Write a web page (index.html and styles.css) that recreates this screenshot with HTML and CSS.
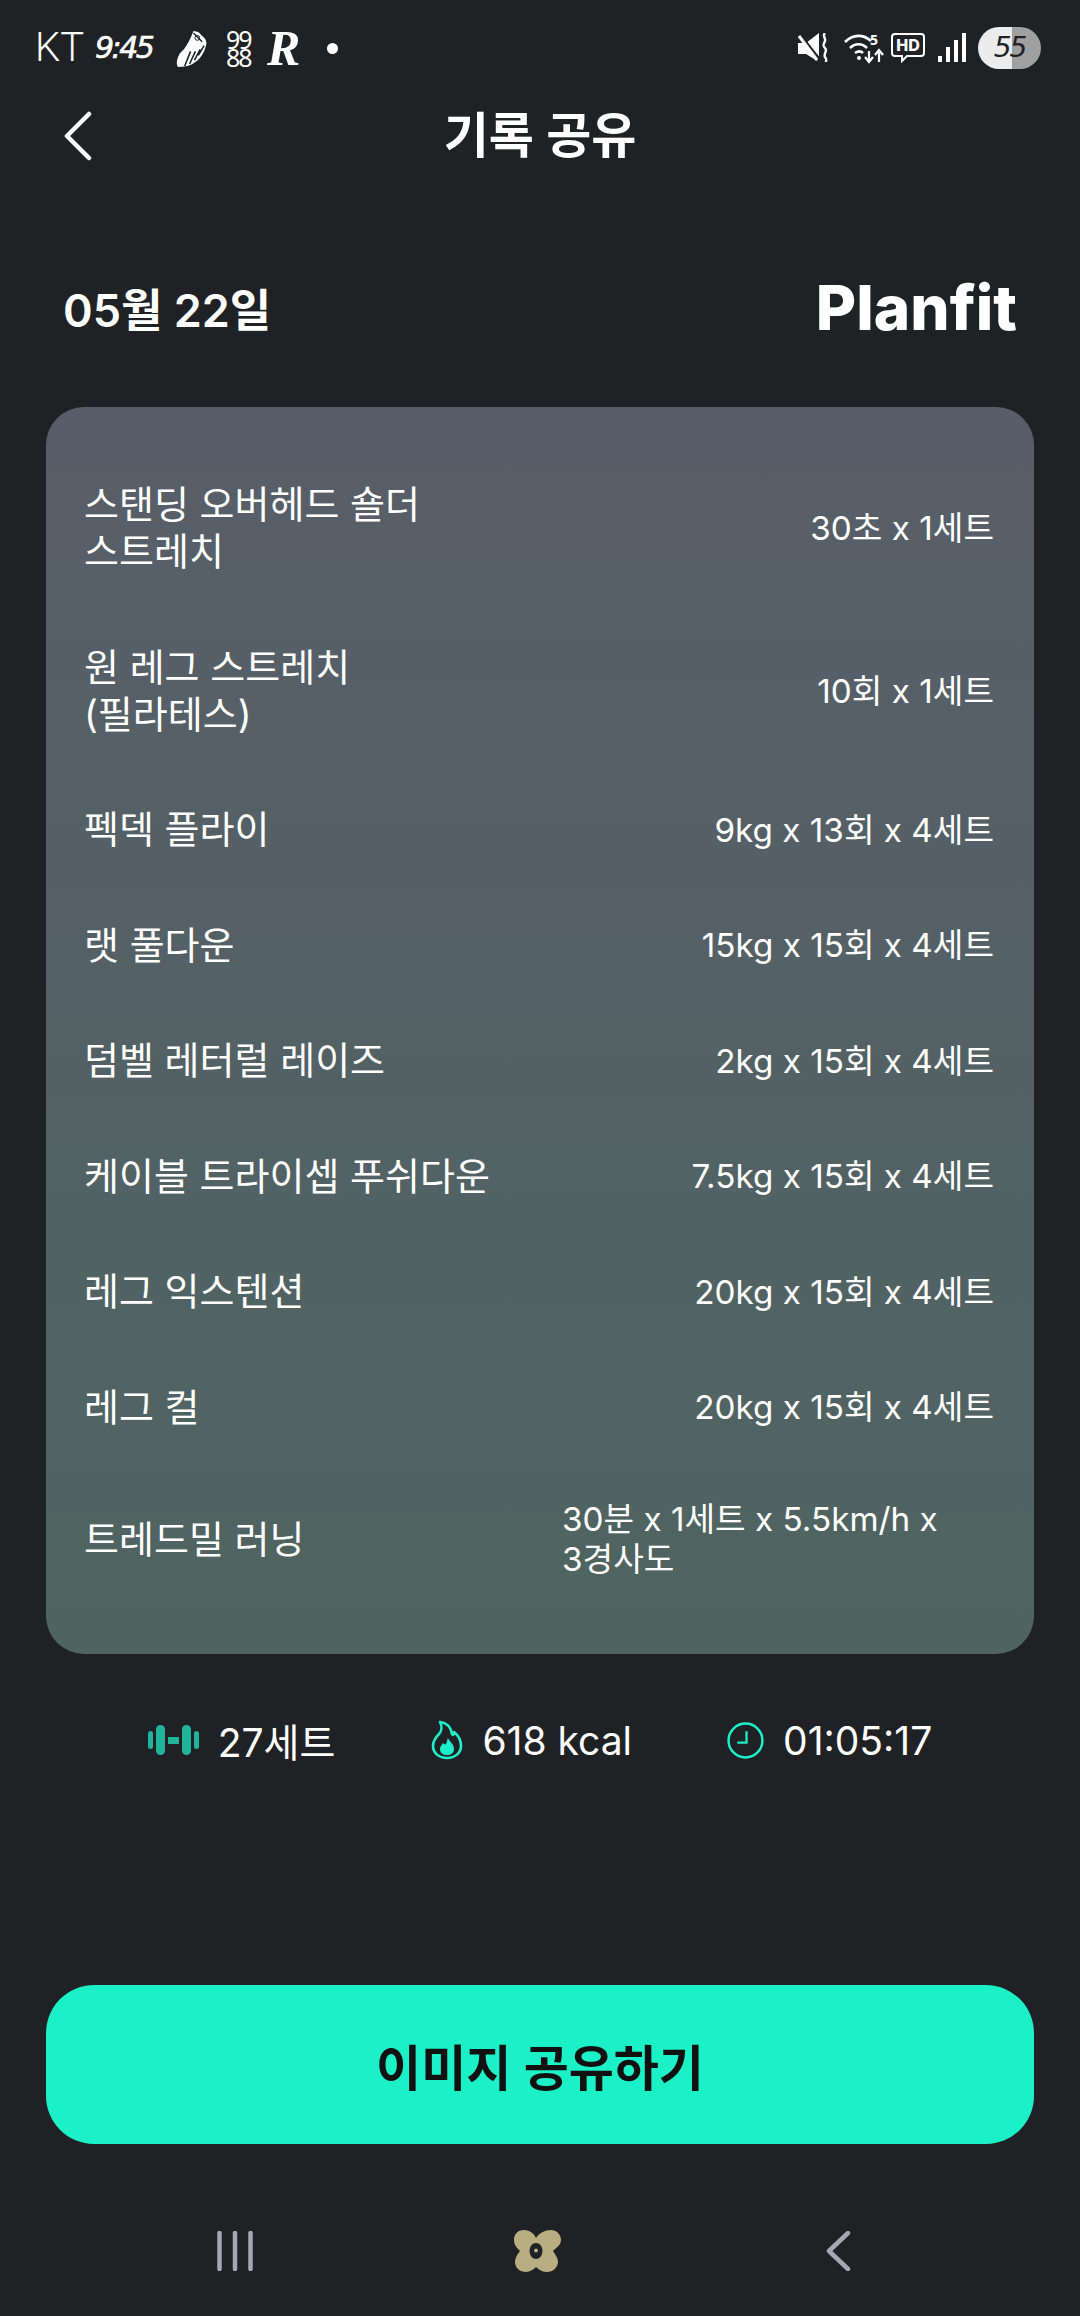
FILE: index.html
```html
<!DOCTYPE html>
<html lang="ko">
<head>
<meta charset="utf-8">
<title>기록 공유</title>
<link rel="stylesheet" href="styles.css">
</head>
<body>
<main class="app">
  <div class="status">
    <div class="status-left">
      <span class="carrier">KT</span>
      <span class="clock-text">9:45</span>
      <svg class="shoe" width="31" height="39" viewBox="0 0 32 40"><path d="M2 39c-2-3-1-7 0-10l2-4 4-4c4-5 7-11 10-19l5 1 7 7c1 2 2 4 1 7-2 7-5 13-11 17-5 4-11 5-18 5z" fill="#fff"/><path d="M9 38l6-15M14 36l6-13M19 32l6-11M23 27l6-10" stroke="#1f2125" stroke-width="1.600" fill="none"/><path d="M18 4l9 9" stroke="#1f2125" stroke-width="1.400"/><circle cx="22" cy="9" r="2.500" fill="none" stroke="#1f2125" stroke-width="1"/></svg>
      <span class="nines">99<br>88</span>
      <span class="r-logo">R</span>
      <span class="dot"></span>
    </div>
    <div class="status-right">
      <svg class="ic-mute" width="30" height="30" viewBox="0 0 30 30"><path d="M0 10h8L21 0v29L8 21H0z" fill="#fff"/><path d="M0 0l22 28" stroke="#1f2125" stroke-width="4"/><path d="M1 3l18 24" stroke="#fff" stroke-width="3"/><path d="M27 0c-3 3 1 5 0 8s-3 4 0 7-2 6 0 9 1 2 1 5" stroke="#fff" stroke-width="2.400" fill="none"/></svg>
      <svg class="ic-wifi" width="40" height="30" viewBox="0 0 40 30"><path d="M1 9c8-8 18-8 26-1M6 15c5-5 12-5 17 0M11 20c3-2 6-2 8 0" stroke="#fff" stroke-width="2.600" fill="none"/><circle cx="15" cy="25" r="2" fill="#fff"/><path d="M25 18v10M21 24l4 5 4-5M35 29V18M31 22l4-5 4 5" stroke="#fff" stroke-width="2.200" fill="none"/><text x="26" y="12" class="wifi-five">5</text></svg>
      <svg class="ic-hd" width="36" height="30" viewBox="0 0 36 30"><path d="M5 1h26a3 3 0 0 1 3 3v16a3 3 0 0 1-3 3H17l-5 5v-5H5a3 3 0 0 1-3-3V4a3 3 0 0 1 3-3z" fill="none" stroke="#fff" stroke-width="2"/><text x="18" y="18" class="hd-text">HD</text></svg>
      <svg class="ic-signal" width="28" height="30" viewBox="0 0 28 30"><path d="M0 23h4v6H0zM8 14h4v15H8zM16 7h4v22h-4zM24 0h4v29h-4z" fill="#fff"/></svg>
      <div class="battery"><span class="battery-num">55</span></div>
    </div>
  </div>

  <header class="head">
    <svg class="back" width="28" height="50" viewBox="0 0 28 50"><path d="M25 3L3 25l22 22" fill="none" stroke="#fff" stroke-width="4.500" stroke-linecap="round" stroke-linejoin="round"/></svg>
    <h1 class="title">기록 공유</h1>
    <span></span>
  </header>

  <div class="date-row">
    <span class="date">05월 22일</span>
    <span class="brand">Planfit</span>
  </div>

  <section class="card">
    <div class="row"><div class="ex">스탠딩 오버헤드 숄더<br>스트레치</div><div class="val">30초 x 1세트</div></div>
    <div class="row"><div class="ex">원 레그 스트레치<br>(필라테스)</div><div class="val">10회 x 1세트</div></div>
    <div class="row"><div class="ex">펙덱 플라이</div><div class="val">9kg x 13회 x 4세트</div></div>
    <div class="row"><div class="ex">랫 풀다운</div><div class="val">15kg x 15회 x 4세트</div></div>
    <div class="row"><div class="ex">덤벨 레터럴 레이즈</div><div class="val">2kg x 15회 x 4세트</div></div>
    <div class="row"><div class="ex">케이블 트라이셉 푸쉬다운</div><div class="val">7.5kg x 15회 x 4세트</div></div>
    <div class="row"><div class="ex">레그 익스텐션</div><div class="val">20kg x 15회 x 4세트</div></div>
    <div class="row"><div class="ex">레그 컬</div><div class="val">20kg x 15회 x 4세트</div></div>
    <div class="row"><div class="ex">트레드밀 러닝</div><div class="val">30분 x 1세트 x 5.5km/h x 3경사도</div></div>
  </section>

  <div class="stats">
    <div class="stat">
      <svg width="51" height="30" viewBox="0 0 51 30"><g fill="#22b39b"><rect x="0" y="6" width="5" height="18" rx="2.500"/><rect x="8" y="0" width="9" height="30" rx="4.500"/><rect x="20" y="12" width="11" height="7"/><rect x="34" y="0" width="9" height="30" rx="4.500"/><rect x="46" y="6" width="5" height="18" rx="2.500"/></g></svg>
      <span>27세트</span>
    </div>
    <div class="stat">
      <svg width="33" height="40" viewBox="0 0 33 40"><path d="M10 2c8 1 11 6 12 12 1 2 2 0 2-2 5 4 7 9 7 14 0 7-6 12-14 12S3 33 3 26c0-5 2-8 6-12 3-3 3-8 1-12z" fill="none" stroke="#1df0c8" stroke-width="2.600" stroke-linejoin="round"/><path d="M18 18c1 3 6 6 6 11 0 4-3 6-7 6s-7-2-7-6c0-3 2-4 3-6 1 1 2 2 3 1 1-2 1-4 2-6z" fill="#1df0c8"/></svg>
      <span>618 kcal</span>
    </div>
    <div class="stat">
      <svg width="37" height="37" viewBox="0 0 36 36"><circle cx="18" cy="18" r="16.500" fill="none" stroke="#1df0c8" stroke-width="2.400"/><path d="M19 9v11h-9" fill="none" stroke="#1df0c8" stroke-width="2.200"/></svg>
      <span>01:05:17</span>
    </div>
  </div>

  <button class="share">이미지 공유하기</button>

  <nav class="nav">
    <svg width="36" height="40" viewBox="0 0 36 40"><path d="M2.500 2v36M18 2v36M33.500 2v36" stroke="#a4a9af" stroke-width="4.500" stroke-linecap="round"/></svg>
    <svg width="47" height="42" viewBox="0 0 47 42"><path d="M22 8C20 3 15 0 10 0 4 0 0 4 0 10c0 5 3 8 6 11-3 4-5 7-5 11 0 6 5 10 11 10 4 0 8-3 10-5 3 3 7 5 11 5 6 0 11-5 11-10 0-4-3-8-5-11 3-3 8-6 8-11 0-6-5-10-10-10-6 0-12 3-15 8z" fill="#b9ae82"/><ellipse cx="22" cy="21" rx="6.500" ry="8" fill="#1f2226"/><circle cx="22" cy="20.500" r="2" fill="#b9ae82"/></svg>
    <svg width="30" height="40" viewBox="0 0 30 40"><path d="M27 2L8 20l19 18" fill="none" stroke="#a4a9af" stroke-width="4.500" stroke-linecap="round" stroke-linejoin="round"/></svg>
  </nav>
</main>
</body>
</html>
```

FILE: styles.css
```css
* { box-sizing: border-box; }
html, body { margin: 0; padding: 0; }
body {
  background: #1f2125;
  color: #fff;
  font-family: Inter, "Noto Sans CJK KR", sans-serif;
}
.app {
  width: 1080px;
  height: 2316px;
  display: flex;
  flex-direction: column;
  overflow: hidden;
}
.status {
  height: 93px;
  padding: 3px 39px 0 35px;
  display: flex;
  justify-content: space-between;
  align-items: center;
}
.status-left, .status-right { display: flex; align-items: center; }
.carrier { font: 300 40px/1 Roboto, sans-serif; width: 46px; margin-right: 14px; }
.clock-text {
  font: italic 400 30px/1 "DejaVu Sans", sans-serif;
  -webkit-text-stroke: 0.6px #fff;
  width: 61px;
  letter-spacing: -2.5px;
  margin-right: 20px;
  white-space: nowrap;
}
.shoe { margin-right: 19px; }
.nines {
  font: 400 25px/18px "Noto Sans", sans-serif;
  letter-spacing: -2px;
  width: 25px;
  margin-right: 16px;
}
.r-logo {
  font: italic 700 50px/1 "Liberation Serif", serif;
  width: 38px;
  margin-right: 22px;
}
.dot { width: 11px; height: 11px; border-radius: 50%; background: #fff; }
.ic-mute { margin-right: 16px; }
.ic-wifi { margin-right: 6px; overflow: visible; }
.ic-hd { margin-right: 12px; }
.ic-signal { margin-right: 12px; }
.wifi-five { font: 700 14px "Noto Sans", sans-serif; fill: #fff; }
.hd-text { font: 800 16px Inter, sans-serif; fill: #fff; text-anchor: middle; }
.battery {
  width: 63px;
  height: 42px;
  border-radius: 21px;
  background: linear-gradient(90deg, #ececec 0 54%, #a0a0a0 54% 100%);
  display: flex;
  align-items: center;
  justify-content: center;
}
.battery-num {
  font: italic 400 28px/1 "DejaVu Sans", sans-serif;
  color: #1f2125;
  letter-spacing: -2px;
}
.head {
  height: 85px;
  padding: 0 0 0 64px;
  display: grid;
  grid-template-columns: 1fr auto 1fr;
  align-items: center;
  margin-right: 64px;
}
.title { margin: 0; font-size: 49px; font-weight: 600; line-height: 60px; }
.date-row {
  height: 229px;
  padding: 29px 63px 0 63px;
  display: flex;
  justify-content: space-between;
  align-items: center;
}
.date { font-size: 45px; font-weight: 600; }
.brand { font-size: 62px; font-weight: 800; }
.card {
  margin: 0 46px;
  height: 1247px;
  padding: 40px 40px 0 38px;
  border-radius: 38px;
  background: linear-gradient(180deg, #585e69, #4f6461);
}
.row {
  padding: 34.25px 0;
  display: flex;
  justify-content: space-between;
  align-items: center;
  gap: 40px;
}
.ex { font-size: 38px; line-height: 47px; flex: none; }
.val { font-size: 33.25px; line-height: 40px; max-width: 432px; word-break: keep-all; }
.stats {
  height: 172px;
  display: flex;
  justify-content: center;
  align-items: center;
  gap: 95px;
}
.stat { display: flex; align-items: center; gap: 19px; font-size: 39px; }
.share {
  margin: 159px 46px 0;
  height: 159px;
  border: 0;
  border-radius: 48px;
  background: #1bf0c6;
  color: #111;
  font-family: inherit;
  font-size: 49px;
  font-weight: 600;
}
.nav {
  margin-top: 86px;
  padding: 0 229px 0 217px;
  display: flex;
  justify-content: space-between;
  align-items: center;
}
```
